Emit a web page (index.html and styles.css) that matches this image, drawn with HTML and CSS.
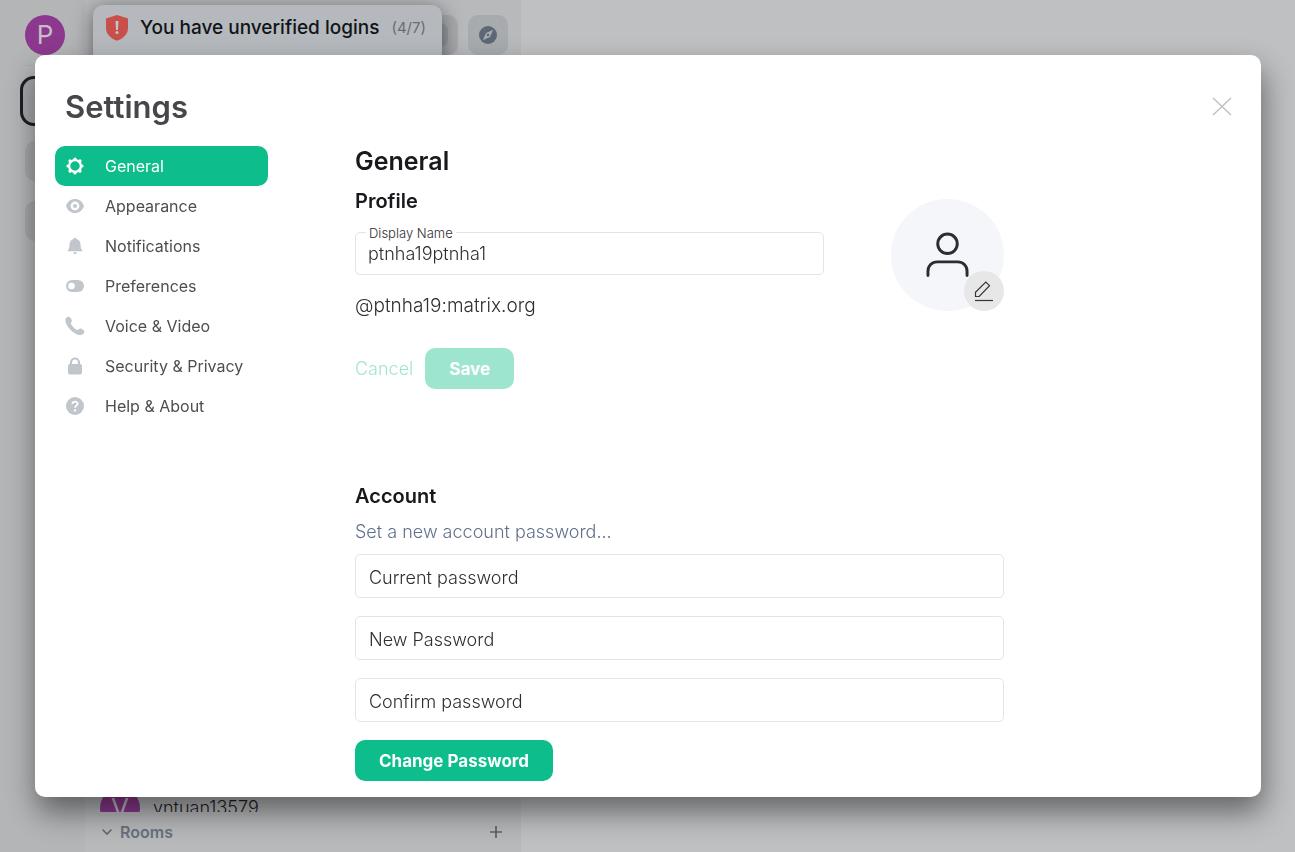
FILE: index.html
```
<!DOCTYPE html>
<html lang="en">
<head>
<meta charset="utf-8">
<title>Settings</title>
<link rel="stylesheet" href="styles.css">
</head>
<body>
<div class="app">
  <nav class="spaces" aria-label="Spaces">
    <button class="avatar" aria-label="User menu">P</button>
    <hr class="spaces-rule">
    <button class="space space-active" aria-label="Home"></button>
    <button class="space" aria-label="Favourites"></button>
    <button class="space" aria-label="Add space"></button>
  </nav>
  <aside class="left-panel">
    <div class="panel-tools">
      <button class="tool" aria-label="Dial pad"><span class="tool-chip"></span></button>
      <button class="tool" aria-label="Explore rooms">
        <svg width="18" height="18" viewBox="0 0 18 18"><circle cx="9" cy="9" r="9" fill="#5e6775"/><path d="M14.2 3.8 11 11 3.8 14.2 7 7z" fill="#a8abae"/><circle cx="9" cy="9" r="1.3" fill="#5e6775"/></svg>
      </button>
    </div>
    <div class="room-list">
      <a class="room" href="#room"><span class="avatar">V</span>vntuan13579</a>
    </div>
    <div class="section-head">
      <svg width="12" height="8" viewBox="0 0 12 8"><path d="m2 2 4 4 4-4" fill="none" stroke="#5f6774" stroke-width="1.6" stroke-linecap="round"/></svg>
      <h2 class="section-title">Rooms</h2>
      <button class="add-room" aria-label="Add room"><svg width="14" height="14" viewBox="0 0 14 14"><path d="M7 1v12M1 7h12" stroke="#596273" stroke-width="1.7"/></svg></button>
    </div>
  </aside>
  <main class="room-view"></main>
</div>

<div class="toast" role="alert">
  <svg width="22" height="26" viewBox="0 0 22 26"><path d="M11 0 22 3.4V13c0 6-4.500 10.500-11 12.700C4.500 23.500 0 19 0 13V3.400z" fill="#c94f4b"/><path d="M9.500 6h3l-.6 9h-1.800z" fill="#c4c5c9"/><circle cx="11" cy="17.600" r="1.500" fill="#c4c5c9"/></svg>
  <h2 class="toast-title">You have unverified logins</h2>
  <span class="toast-count">(4/7)</span>
</div>

<div class="overlay">
  <div class="dialog" role="dialog" aria-labelledby="dialog-title">
    <header class="dialog-head">
      <h1 class="dialog-title" id="dialog-title">Settings</h1>
      <button class="close" aria-label="Close"><svg width="20" height="20" viewBox="0 0 20 20"><path d="m1 1 18 17M19 1 1 18" stroke="#c1c1c1" stroke-width="1.500"/></svg></button>
    </header>
    <div class="dialog-body">
      <nav class="tabs" aria-label="Settings sections">
        <button class="tab tab-active">
          <svg class="tab-icon" viewBox="0 0 20 20"><circle cx="10" cy="10" r="5.900" fill="none" stroke="currentColor" stroke-width="2.300"/><path d="M10 3v.5M10 17v-.5M3 10h.5M17 10h-.5M5 5l.3.3M15 15l-.3-.3M5 15l.3-.3M15 5l-.3.3" stroke="currentColor" stroke-width="3.200" stroke-linecap="round"/></svg>
          General
        </button>
        <button class="tab">
          <svg class="tab-icon" viewBox="0 0 20 20"><path fill="currentColor" fill-rule="evenodd" d="M10 3c4.100 0 7.500 2.600 9 7-1.500 4.400-4.900 7-9 7s-7.500-2.600-9-7c1.500-4.400 4.900-7 9-7zm0 2.600a4.400 4.400 0 1 0 0 8.800 4.400 4.400 0 0 0 0-8.800zm0 2.400a2 2 0 1 1 0 4 2 2 0 0 1 0-4z"/></svg>
          Appearance
        </button>
        <button class="tab">
          <svg class="tab-icon" viewBox="0 0 20 20"><path fill="currentColor" d="M10 1.700c.9 0 1.500.6 1.500 1.400 2.500.7 4 2.700 4 5.400 0 3.500.8 4.700 1.800 5.800v1H2.700v-1c1-1.100 1.800-2.300 1.800-5.800 0-2.700 1.500-4.700 4-5.400 0-.8.6-1.400 1.500-1.400zM8.200 16.300h3.600c0 1.100-.8 2-1.800 2s-1.800-.9-1.800-2z"/></svg>
          Notifications
        </button>
        <button class="tab">
          <svg class="tab-icon" viewBox="0 0 20 20"><rect x="1" y="4" width="18" height="12" rx="6" fill="currentColor"/><circle cx="6.500" cy="10" r="3.300" fill="#fff"/></svg>
          Preferences
        </button>
        <button class="tab">
          <svg class="tab-icon" viewBox="0 0 20 20"><path fill="currentColor" d="M3.600.8c1.700.3 3.200 2.400 3.300 4 .1 1-1.200 1.800-1 2.800.5 2.300 4 5.700 6.300 6.300 1 .3 2-1.500 3.200-1.300 1.600.2 3.700 1.500 4 3 .2 1.500-1.600 3.200-3.500 3.500-3.200.3-7.600-2.400-10.700-5.600C2.400 10.600.2 6.700.4 4 .5 2.300 2.100.6 3.600.8z"/></svg>
          Voice &amp; Video
        </button>
        <button class="tab">
          <svg class="tab-icon" viewBox="0 0 20 20"><rect x="3" y="8" width="14" height="10.500" rx="2" fill="currentColor"/><path d="M6 9V6.500a4 4 0 0 1 8 0V9" fill="none" stroke="currentColor" stroke-width="2.200"/></svg>
          Security &amp; Privacy
        </button>
        <button class="tab">
          <svg class="tab-icon" viewBox="0 0 20 20"><circle cx="10" cy="10" r="9" fill="currentColor"/><path d="M7.500 8c0-3.200 5.100-3.100 5.100-.2C12.600 9.600 10 9.700 10 11.800" fill="none" stroke="#fff" stroke-width="1.800"/><circle cx="10" cy="14.400" r="1.200" fill="#fff"/></svg>
          Help &amp; About
        </button>
      </nav>

      <section class="content">
        <h2 class="page-title">General</h2>
        <form class="profile">
          <div class="profile-fields">
            <h3 class="subhead">Profile</h3>
            <div class="field field-labelled">
              <input class="input" id="display-name" type="text" value="ptnha19ptnha1">
              <label class="field-label" for="display-name">Display Name</label>
            </div>
            <p class="user-id">@ptnha19:matrix.org</p>
            <div class="actions">
              <button class="link-button" type="button" disabled>Cancel</button>
              <button class="primary" type="submit" disabled>Save</button>
            </div>
          </div>
          <div class="picture">
            <svg width="43" height="46" viewBox="0 0 44 46" fill="none" stroke="#2a2d32" stroke-width="3" stroke-linecap="round"><circle cx="22" cy="11.500" r="10"/><path d="M2 44v-4.500C2 34 6 30 11.500 30h21C38 30 42 34 42 39.500V44"/></svg>
            <button class="edit" type="button" aria-label="Upload avatar"><svg width="20" height="22" viewBox="0 0 20 22" fill="none" stroke="#33363a"><path d="M1.500 16.500v-4.200L11.800 2l3.700 3.700L5.200 16.500z" stroke-width="1.200"/><path d="M1 20.500h18" stroke-width="1.200"/></svg></button>
          </div>
        </form>

        <form class="account">
          <h3 class="subhead">Account</h3>
          <p class="hint">Set a new account password...</p>
          <div class="field"><input class="input" type="password" placeholder="Current password" aria-label="Current password"></div>
          <div class="field"><input class="input" type="password" placeholder="New Password" aria-label="New Password"></div>
          <div class="field"><input class="input" type="password" placeholder="Confirm password" aria-label="Confirm password"></div>
          <button class="primary" type="submit">Change Password</button>
        </form>
      </section>
    </div>
  </div>
</div>
</body>
</html>
```
FILE: styles.css
```
* { box-sizing: border-box; }

body {
  margin: 0;
  overflow: hidden;
  font: 300 18px/24px Inter, "Liberation Sans", sans-serif;
  color: #2e2f32;
}

h1, h2, h3, p { margin: 0; }

button, input { font: inherit; color: inherit; }

button { padding: 0; border: 0; background: none; }

svg { display: block; flex: none; }

/* Application behind the dialog */
.app { display: flex; height: 100vh; background: #bfc0c2; }

.spaces {
  display: flex;
  flex-direction: column;
  gap: 20px;
  width: 85px;
  padding: 15px 0 0 25px;
  background: #b3b5b7;
}

.avatar {
  display: flex;
  align-items: center;
  justify-content: center;
  flex: none;
  width: 40px;
  height: 40px;
  border-radius: 50%;
  background: #8c388e;
  color: #c4bfc6;
  font-size: 26px;
  font-weight: 400;
}

.spaces-rule {
  width: 40px;
  margin: -10px 0;
  border: 0;
  border-top: 1px solid #a9abad;
}

.space { width: 40px; height: 40px; border-radius: 10px; background: #a5a7ab; }

.space-active {
  width: 50px;
  height: 50px;
  margin: 0 0 -5px -5px;
  border: 3px solid #1c1f23;
  border-radius: 14px;
}

.left-panel {
  display: flex;
  flex-direction: column;
  width: 436px;
  background: #b8b9bb;
}

.panel-tools { display: flex; justify-content: flex-end; gap: 10px; padding: 15px 13px; }

.tool {
  display: flex;
  align-items: center;
  justify-content: center;
  width: 40px;
  height: 40px;
  border-radius: 10px;
  background: #a8abae;
}

.tool-chip { width: 20px; height: 24px; border-radius: 8px; background: #999ca2; }

.room-list { height: 32px; margin-top: auto; padding-left: 15px; overflow: hidden; }

.room {
  display: flex;
  align-items: center;
  gap: 13px;
  height: 56px;
  color: #1f2124;
  text-decoration: none;
}

.section-head {
  display: flex;
  align-items: center;
  gap: 7px;
  height: 40px;
  padding: 0 18px 0 16px;
}

.section-title { margin-right: auto; font-size: 16px; font-weight: 600; color: #68717e; }

.room-view { flex: 1; }

/* Notification toast */
.toast {
  position: absolute;
  top: 5px;
  left: 93px;
  display: flex;
  align-items: center;
  gap: 12px;
  width: 349px;
  height: 80px;
  padding: 0 12px 34px 13px;
  border-radius: 10px;
  background: #b5b8bd;
  box-shadow: 0 4px 20px rgba(0, 0, 0, .5);
  white-space: nowrap;
}

.toast-title { font-size: 19px; font-weight: 500; color: #111417; }
.toast-count { font-size: 15px; font-weight: 400; color: #676e79; }

/* Settings dialog */
.overlay { position: fixed; inset: 0; display: flex; padding: 55px 34px 55px 35px; }

.dialog {
  display: flex;
  flex-direction: column;
  flex: 1;
  min-width: 0;
  border-radius: 10px;
  background: #fff;
  box-shadow: 2px 15px 30px rgba(0, 0, 0, .48);
  overflow: hidden;
}

.dialog-head {
  display: flex;
  align-items: center;
  justify-content: space-between;
  padding: 32px 29px 19px 30px;
}

.dialog-title { font-size: 31px; line-height: 40px; font-weight: 600; color: #45474a; }

.dialog-body { display: flex; flex: 1; min-height: 0; padding-left: 20px; }

.tabs { flex: none; width: 213px; margin-right: 87px; }

.tab {
  display: flex;
  align-items: center;
  gap: 20px;
  width: 100%;
  height: 40px;
  padding-left: 10px;
  border-radius: 10px;
  font-size: 16px;
  font-weight: 400;
  color: #4c4e51;
}

.tab-active { background: #0dbd8b; color: #fff; }
.tab-icon { width: 20px; height: 20px; color: #c1c6cd; }
.tab-active .tab-icon { color: #fff; }

.content { flex: 1; min-width: 0; max-width: 649px; overflow: hidden; }

.page-title { font-size: 25px; line-height: 30px; font-weight: 600; color: #17191c; }

.subhead { font-size: 20px; line-height: 30px; font-weight: 600; color: #17191c; }

.profile { display: flex; gap: 67px; padding-top: 10px; }
.profile-fields { flex: 1; min-width: 0; }

.field { position: relative; margin-bottom: 18px; }
.field-labelled { margin: 16px 0 19px; }

.input {
  display: block;
  width: 100%;
  height: 44px;
  padding: 3px 13px 0;
  border: 1px solid #e3e4e6;
  border-radius: 5px;
  background: #fff;
  outline: 0;
}

.field-labelled .input { height: 43px; padding: 0 12px; }
.input::placeholder { color: #2e2f32; opacity: 1; }

.field-label {
  position: absolute;
  top: -8px;
  left: 11px;
  padding: 0 3px;
  background: #fff;
  font-size: 13px;
  line-height: 18px;
}

.user-id { font-size: 19px; }

.actions { display: flex; gap: 12px; margin-top: 30px; }
.link-button { color: #0dbd8b; }

.primary {
  height: 41px;
  padding: 0 24px;
  border-radius: 10px;
  background: #0dbd8b;
  color: #fff;
  font-size: 17px;
  font-weight: 700;
}

.link-button:disabled, .primary:disabled { opacity: .4; }

.picture {
  position: relative;
  display: flex;
  align-items: center;
  justify-content: center;
  width: 113px;
  height: 112px;
  margin-top: 13px;
  border-radius: 50%;
  background: #f4f6fa;
}

.edit {
  position: absolute;
  right: 0;
  bottom: 0;
  display: flex;
  align-items: center;
  justify-content: center;
  width: 40px;
  height: 40px;
  border-radius: 50%;
  background: #e7e7e7;
}

.account { padding-top: 92px; }
.hint { margin: 9px 0 10px; color: #61708b; }
```
